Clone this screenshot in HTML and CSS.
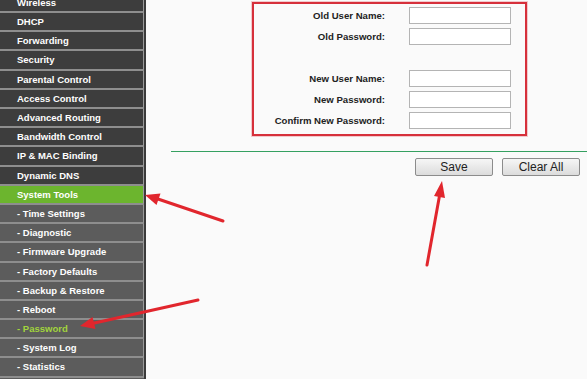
FILE: index.html
```html
<!DOCTYPE html>
<html lang="en">
 <head>
  <meta charset="UTF-8">
  <title>Password</title>
  <link rel="stylesheet" href="styles.css">
 </head>
 <body>
  <div class="menu">
   <ul>
    <li>Wireless</li>
    <li>DHCP</li>
    <li>Forwarding</li>
    <li>Security</li>
    <li>Parental Control</li>
    <li>Access Control</li>
    <li>Advanced Routing</li>
    <li>Bandwidth Control</li>
    <li>IP &amp; MAC Binding</li>
    <li>Dynamic DNS</li>
    <li class="active">System Tools</li>
    <li class="sub">- Time Settings</li>
    <li class="sub">- Diagnostic</li>
    <li class="sub">- Firmware Upgrade</li>
    <li class="sub">- Factory Defaults</li>
    <li class="sub">- Backup &amp; Restore</li>
    <li class="sub">- Reboot</li>
    <li class="sub current">- Password</li>
    <li class="sub">- System Log</li>
    <li class="sub">- Statistics</li>
   </ul>
  </div>
  <div class="main">
   <form>
    <div class="box">
     <label>Old User Name:</label><input type="text" name="old_user">
     <label>Old Password:</label><input type="password" name="old_pwd">
     <span class="blank"></span><span class="blank"></span>
     <label>New User Name:</label><input type="text" name="new_user">
     <label>New Password:</label><input type="password" name="new_pwd">
     <label>Confirm New Password:</label><input type="password" name="confirm_pwd">
    </div>
    <div class="line"></div>
    <div class="buttons">
     <input type="button" value="Save" class="button">
     <input type="button" value="Clear All" class="button">
    </div>
   </form>
  </div>
  <svg class="arrows" width="587" height="379" viewBox="0 0 587 379">
   <g stroke="#e1262d" stroke-width="3" stroke-linecap="round">
    <line x1="223" y1="221" x2="155" y2="198"/>
    <line x1="198" y1="300" x2="90" y2="324"/>
    <line x1="427" y1="265" x2="440" y2="193"/>
   </g>
   <g fill="#e1262d">
    <polygon points="145,195 160.5,193.5 156.5,205"/>
    <polygon points="80,326 95.5,329 92.5,317"/>
    <polygon points="442,181 445,198 434,196"/>
   </g>
  </svg>
 </body>
</html>
```
FILE: styles.css
```css
body{
	margin:0;
	padding:0;
	display:flex;
	height:379px;
	overflow:hidden;
	background:#fafafa;
	font-family:"Liberation Sans", Arial, sans-serif;
}

.menu{
	width:146px;
	flex:none;
	background:#5b5b5b;
	border-right:2px solid #3b3b3b;
	box-sizing:border-box;
	overflow:hidden;
}
.menu ul{
	list-style:none;
	margin:-6.1px 0 0 0;
	padding:0;
}
.menu li{
	height:17.2px;
	line-height:17.2px;
	border-bottom:2px solid #8e8e8e;
	border-right:1px solid #9a9a9a;
	background:#3d3d3d;
	color:#ffffff;
	font-size:9.5px;
	font-weight:bold;
	padding-left:17px;
	white-space:nowrap;
}
.menu li.active{
	background:#6cb52e;
}
.menu li.sub{
	background:#5c5c5c;
}
.menu li.current{
	color:#a2d43c;
}

.main{
	flex:1;
	padding-top:2px;
}

.box{
	margin-left:106px;
	width:275px;
	height:134px;
	box-sizing:border-box;
	border:2px solid #d6303b;
	box-shadow:0 0 0 1px rgba(226,110,118,0.35);
	padding:1px 0 3px 0;
	display:grid;
	grid-template-columns:131px 102px;
	grid-auto-rows:21px;
	column-gap:24px;
	align-items:center;
}
.box label{
	text-align:right;
	font-size:9.6px;
	font-weight:bold;
	color:#222222;
}
.box input{
	width:102px;
	height:17px;
	box-sizing:border-box;
	border:1px solid #b4b4b4;
	background:#ffffff;
	margin:0;
	padding:0;
}

.line{
	height:1px;
	margin:15px 0 0 25px;
	background:#35a060;
}

.buttons{
	display:flex;
	gap:9px;
	padding-left:269px;
	margin-top:6px;
}
.button{
	width:78px;
	height:18px;
	margin:0;
	padding:0;
	font-family:"Liberation Sans", Arial, sans-serif;
	font-size:12px;
	color:#222222;
	border:1px solid #8c8c8c;
	border-radius:2px;
	background:linear-gradient(#f6f6f6, #dcdcdc);
}

.arrows{
	position:absolute;
	left:0;
	top:0;
	pointer-events:none;
}
```
